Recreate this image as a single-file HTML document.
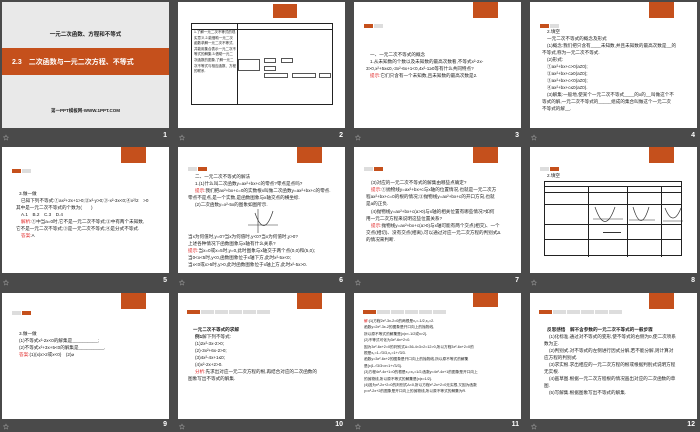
<!DOCTYPE html>
<html><head><meta charset="utf-8"><style>
*{margin:0;padding:0;box-sizing:border-box}
body{width:700px;height:431px;background:#4a4a4a;position:relative;overflow:hidden;font-family:"Liberation Sans","Noto Sans CJK SC",sans-serif}
.s{position:absolute;width:167px;height:126px;background:#fff;overflow:hidden}
.lb{position:absolute;width:167px;height:14px;color:#ddd;font-size:7px}
.lb .i{position:absolute;left:1px;top:4px;font-size:6px}
.lb .n{position:absolute;right:2px;top:3px;font-weight:bold;font-size:7px;color:#fff}
.ob{position:absolute;left:119px;top:0;width:25px;height:16px;background:#c5501c;color:#fff;font-size:3px;text-align:center;padding-top:5px;line-height:3px}
.tb{position:absolute;top:22px;left:10px;height:4px;display:flex;gap:1px}
.tb span{display:block;width:9px;height:4px;background:#ddd}
.tb span.o{background:#c5501c}
.t{position:absolute;font-size:4.6px;line-height:6.6px;color:#1a1a1a;white-space:nowrap}
.r{color:#e02020}
</style></head><body>

<div class="s" style="left:2px;top:2px;background:#e9e9e9">
 <div style="position:absolute;top:28px;width:100%;text-align:center;font-size:5.5px;font-weight:bold;color:#222">一元二次函数、方程和不等式</div>
 <div style="position:absolute;top:46px;width:100%;height:27px;background:#c5501c;color:#fff;font-size:7px;font-weight:bold;padding:9px 0 0 10px">2.3　二次函数与一元二次方程、不等式</div>
 <div style="position:absolute;top:106px;width:100%;text-align:center;font-size:4.5px;font-weight:bold;color:#222">第一PPT模板网-WWW.1PPT.COM</div>
</div>
<div class="lb" style="left:2px;top:129px"><span class="i">☆</span><span class="n">1</span></div>

<div class="s" style="left:178px;top:2px">
 <div class="ob" style="left:95px;width:24px;height:14px;top:2px"></div>
 <div style="position:absolute;left:13px;top:21px;width:142px;height:82px;border:1px solid #222">
  <div style="position:absolute;left:0;top:0;width:100%;height:6px;border-bottom:1px solid #222"></div>
  <div style="position:absolute;left:45px;top:0;height:100%;border-left:1px solid #222"></div>
  <div class="t" style="left:2px;top:6px;font-size:3.5px;line-height:5.6px;white-space:normal;width:42px">1.了解一元二次不等式的现实意义.2.能借助一元二次函数求解一元二次不等式,并能用集合表示一元二次不等式的解集.3.借助一元二次函数的图象,了解一元二次不等式与相应函数、方程的联系.</div>
  <div style="position:absolute;left:46px;top:35px;width:22px;height:12px;border:1px solid #555"></div>
  <div style="position:absolute;left:72px;top:34px;width:12px;height:5px;border:1px solid #555"></div>
  <div style="position:absolute;left:89px;top:34px;width:12px;height:5px;border:1px solid #555"></div>
  <div style="position:absolute;left:72px;top:42px;width:12px;height:5px;border:1px solid #555"></div>
  <div style="position:absolute;left:72px;top:49px;width:24px;height:5px;border:1px solid #555"></div>
  <div style="position:absolute;left:100px;top:49px;width:24px;height:5px;border:1px solid #555"></div>
  <div style="position:absolute;left:127px;top:49px;width:12px;height:5px;border:1px solid #555"></div>
 </div>
</div>
<div class="lb" style="left:178px;top:129px"><span class="i">☆</span><span class="n">2</span></div>

<div class="s" style="left:354px;top:2px">
 <div class="ob"></div>
 <div class="tb"><span class="o"></span><span></span></div>
 <div class="t" style="left:16px;top:50px">一、一元二次不等式的概念</div>
 <div class="t" style="left:16px;top:57px">1.从未知数的个数以及未知数的最高次数看,不等式x²-2x-</div>
 <div class="t" style="left:12px;top:64px">3&gt;0,x²+5x≤0,-3x²-6x+1&lt;0,4x²-1≥0等有什么共同特点?</div>
 <div class="t" style="left:16px;top:71px"><span class="r">提示:</span>它们只含有一个未知数,且未知数的最高次数是2.</div>
</div>
<div class="lb" style="left:354px;top:129px"><span class="i">☆</span><span class="n">3</span></div>

<div class="s" style="left:530px;top:2px">
 <div class="ob"></div>
 <div class="tb"><span class="o"></span><span></span></div>
 <div class="t" style="left:17px;top:27px">2.填空</div>
 <div class="t" style="left:17px;top:34px">一元二次不等式的概念及形式</div>
 <div class="t" style="left:17px;top:41px">(1)概念:我们把只含有____未知数,并且未知数的最高次数是__的</div>
 <div class="t" style="left:12px;top:48px">不等式,称为一元二次不等式.</div>
 <div class="t" style="left:17px;top:55px">(2)形式:</div>
 <div class="t" style="left:17px;top:62px">①ax²+bx+c&gt;0(a≠0);</div>
 <div class="t" style="left:17px;top:69px">②ax²+bx+c≥0(a≠0);</div>
 <div class="t" style="left:17px;top:76px">③ax²+bx+c&lt;0(a≠0);</div>
 <div class="t" style="left:17px;top:83px">④ax²+bx+c≤0(a≠0).</div>
 <div class="t" style="left:17px;top:90px">(3)解集:一般地,使某个一元二次不等式____的x的__叫做这个不</div>
 <div class="t" style="left:12px;top:97px">等式的解,一元二次不等式的_____组成的集合叫做这个一元二次</div>
 <div class="t" style="left:12px;top:104px">不等式的解__.</div>
</div>
<div class="lb" style="left:530px;top:129px"><span class="i">☆</span><span class="n">4</span></div>

<div class="s" style="left:2px;top:147px">
 <div class="ob"></div>
 <div class="tb"><span class="o"></span><span></span></div>
 <div class="t" style="left:17px;top:44px">3.做一做</div>
 <div class="t" style="left:19px;top:51px">已知下列不等式:①ax²+2x+1&gt;0;②x²-y&gt;0;③-x²-3x&lt;0;④x²/2　&gt;0</div>
 <div class="t" style="left:14px;top:58px">其中是一元二次不等式的个数为(　　)</div>
 <div class="t" style="left:19px;top:65px">A.1　B.2　C.3　D.4</div>
 <div class="t" style="left:19px;top:72px"><span class="r">解析:</span>①中当a=0时,它不是一元二次不等式;②中有两个未知数,</div>
 <div class="t" style="left:14px;top:79px">它不是一元二次不等式;③是一元二次不等式;④是分式不等式.</div>
 <div class="t" style="left:19px;top:86px"><span class="r">答案:</span>A</div>
</div>
<div class="lb" style="left:2px;top:274px"><span class="i">☆</span><span class="n">5</span></div>

<div class="s" style="left:178px;top:147px">
 <div class="ob" style="left:119px"></div>
 <div class="tb" style="left:10px;top:20px"><span></span><span class="o"></span></div>
 <div class="t" style="left:17px;top:27px">二、一元二次不等式的解法</div>
 <div class="t" style="left:17px;top:34px">1.(1)什么叫二次函数y=ax²+bx+c的零点?零点是点吗?</div>
 <div class="t" style="left:17px;top:41px"><span class="r">提示:</span>我们把ax²+bx+c=0的实数根x叫做二次函数y=ax²+bx+c的零点.</div>
 <div class="t" style="left:10px;top:48px">零点不是点,是一个实数,是函数图象与x轴交点的横坐标.</div>
 <div class="t" style="left:17px;top:55px">(2)二次函数y=x²-5x的图象如图所示.</div>
 <svg style="position:absolute;left:68px;top:60px" width="34" height="26"><path d="M2 18H32M12 2V26" stroke="#333" stroke-width=".6" fill="none"/><path d="M9 6Q18 32 27 4" stroke="#333" stroke-width=".7" fill="none"/></svg>
 <div class="t" style="left:10px;top:87px">当x为何值时,y=0?当x为何值时,y&lt;0?当x为何值时,y&gt;0?</div>
 <div class="t" style="left:10px;top:94px">上述各种情况下函数图象与x轴有什么关系?</div>
 <div class="t" style="left:10px;top:101px"><span class="r">提示:</span>当x=0或x=5时,y=0,此时图象与x轴交于两个点(0,0)和(5,0);</div>
 <div class="t" style="left:10px;top:108px">当0&lt;x&lt;5时,y&lt;0,函数图象位于x轴下方,此时x²-5x&lt;0;</div>
 <div class="t" style="left:10px;top:115px">当x&lt;0或x&gt;5时,y&gt;0,此时函数图象位于x轴上方,此时x²-5x&gt;0.</div>
</div>
<div class="lb" style="left:178px;top:274px"><span class="i">☆</span><span class="n">6</span></div>

<div class="s" style="left:354px;top:147px">
 <div class="ob"></div>
 <div class="tb" style="top:20px"><span></span><span class="o"></span></div>
 <div class="t" style="left:17px;top:33px">(3)对应的一元二次不等式的解集由哪些点确定?</div>
 <div class="t" style="left:17px;top:40px"><span class="r">提示:</span>①抛物线y=ax²+bx+c与x轴的位置情况,也就是一元二次方</div>
 <div class="t" style="left:12px;top:47px">程ax²+bx+c=0的根的情况;②抛物线y=ax²+bx+c的开口方向,也就</div>
 <div class="t" style="left:12px;top:54px">是a的正负.</div>
 <div class="t" style="left:17px;top:62px">(4)抛物线y=ax²+bx+c(a&gt;0)与x轴的相关位置有哪些情况?如何</div>
 <div class="t" style="left:12px;top:69px">用一元二次方程来说明这些位置关系?</div>
 <div class="t" style="left:17px;top:76px"><span class="r">提示:</span>抛物线y=ax²+bx+c(a&gt;0)与x轴可能有两个交点(相交)、一个</div>
 <div class="t" style="left:12px;top:83px">交点(相切)、没有交点(相离),可以通过对应一元二次方程的判别式Δ</div>
 <div class="t" style="left:12px;top:90px">的情况来判断.</div>
</div>
<div class="lb" style="left:354px;top:274px"><span class="i">☆</span><span class="n">7</span></div>

<div class="s" style="left:530px;top:147px">
 <div class="ob"></div>
 <div class="tb" style="top:20px"><span></span><span class="o"></span></div>
 <div class="t" style="left:17px;top:26px">2.填空</div>
 <div style="position:absolute;left:14px;top:34px;width:138px;height:75px;border:1px solid #222">
  <div style="position:absolute;left:0;top:0;width:100%;height:5px;border-bottom:1px solid #222"></div>
  <div style="position:absolute;left:0;top:10px;width:100%;border-top:1px solid #222"></div>
  <div style="position:absolute;left:0;top:22px;width:100%;border-top:1px solid #222"></div>
  <div style="position:absolute;left:0;top:42px;width:100%;border-top:1px solid #222"></div>
  <div style="position:absolute;left:0;top:57px;width:100%;border-top:1px solid #222"></div>
  <div style="position:absolute;left:43px;top:5px;height:70px;border-left:1px solid #222"></div>
  <div style="position:absolute;left:82px;top:5px;height:70px;border-left:1px solid #222"></div>
  <div style="position:absolute;left:116px;top:5px;height:70px;border-left:1px solid #222"></div>
  <svg style="position:absolute;left:48px;top:24px" width="90" height="18"><path d="M2 1Q12 30 22 1M40 1Q48 28 56 1M72 2Q80 22 88 2" stroke="#333" stroke-width=".7" fill="none"/><path d="M0 13H30M36 14H62M70 15H90" stroke="#333" stroke-width=".5"/></svg>
  <div style="position:absolute;left:58px;top:50px;width:18px;border-top:1px solid #333"></div>
 </div>
</div>
<div class="lb" style="left:530px;top:274px"><span class="i">☆</span><span class="n">8</span></div>

<div class="s" style="left:2px;top:293px">
 <div class="ob"></div>
 <div class="tb" style="top:18px"><span></span><span class="o"></span></div>
 <div class="t" style="left:17px;top:38px">3.做一做</div>
 <div class="t" style="left:17px;top:45px">(1)不等式x²-2x&lt;0的解集是__________;</div>
 <div class="t" style="left:17px;top:52px">(2)不等式x²+3x+5&lt;0的解集是__________.</div>
 <div class="t" style="left:17px;top:59px"><span class="r">答案:</span>(1){x|x&gt;2或x&lt;0}　(2)⌀</div>
</div>
<div class="lb" style="left:2px;top:418px"><span class="i">☆</span><span class="n">9</span></div>

<div class="s" style="left:178px;top:293px">
 <div class="ob"></div>
 <div class="tb" style="top:17px;left:9px"><span class="o" style="width:13px"></span><span style="width:13px"></span><span style="width:13px"></span><span style="width:13px"></span><span style="width:13px"></span><span style="width:13px"></span></div>
 <div class="t" style="left:15px;top:34px;font-weight:bold">一元二次不等式的求解</div>
 <div class="t" style="left:17px;top:41px"><b>例1</b>解下列不等式:</div>
 <div class="t" style="left:17px;top:48px">(1)2x²-3x-2&gt;0;</div>
 <div class="t" style="left:17px;top:55px">(2)-3x²+6x-2&gt;0;</div>
 <div class="t" style="left:17px;top:62px">(3)4x²-4x+1≤0;</div>
 <div class="t" style="left:17px;top:69px">(4)x²-2x+2&gt;0.</div>
 <div class="t" style="left:17px;top:76px"><span class="r">分析:</span>先求出对应一元二次方程的根,再结合对应的二次函数的</div>
 <div class="t" style="left:10px;top:83px">图象写出不等式的解集.</div>
</div>
<div class="lb" style="left:178px;top:418px"><span class="i">☆</span><span class="n">10</span></div>

<div class="s" style="left:354px;top:293px">
 <div class="ob" style="top:0;height:14px"></div>
 <div class="tb" style="top:17px;left:9px"><span class="o" style="width:13px"></span><span style="width:13px"></span><span style="width:13px"></span><span style="width:13px"></span><span style="width:13px"></span><span style="width:13px"></span></div>
 <div class="t" style="left:10px;top:25px;font-size:3.7px;line-height:6.4px"><span class="r">解</span>:(1)方程2x²-3x-2=0的两根是x₁=-1/2,x₂=2.<br>函数y=2x²-3x-2的图象是开口向上的抛物线,<br>所以原不等式的解集是{x|x&lt;-1/2或x&gt;2}.<br>(2)不等式可化为3x²-6x+2&lt;0.<br>因为3x²-6x+2=0的判别式Δ=36-4×3×2=12&gt;0,所以方程3x²-6x+2=0的<br>根是x₁=1-√3/3,x₂=1+√3/3.<br>函数y=3x²-6x+2的图象是开口向上的抛物线,所以原不等式的解集<br>是{x|1-√3/3&lt;x&lt;1+√3/3}.<br>(3)方程4x²-4x+1=0的根是x₁=x₂=1/2,函数y=4x²-4x+1的图象是开口向上<br>的抛物线,所以原不等式的解集是{x|x=1/2}.<br>(4)因为x²-2x+2=0的判别式Δ&lt;0,所以方程x²-2x+2=0无实根,又因为函数<br>y=x²-2x+2的图象是开口向上的抛物线,所以原不等式的解集为R.</div>
</div>
<div class="lb" style="left:354px;top:418px"><span class="i">☆</span><span class="n">11</span></div>

<div class="s" style="left:530px;top:293px">
 <div class="ob"></div>
 <div class="tb" style="top:17px;left:9px"><span class="o" style="width:13px"></span><span style="width:13px"></span><span style="width:13px"></span><span style="width:13px"></span><span style="width:13px"></span><span style="width:13px"></span></div>
 <div class="t" style="left:17px;top:34px;font-weight:bold">反思感悟　解不含参数的一元二次不等式的一般步骤</div>
 <div class="t" style="left:19px;top:41px">(1)化标准.通过对不等式的变形,使不等式的右侧为0,使二次项系</div>
 <div class="t" style="left:14px;top:48px">数为正.</div>
 <div class="t" style="left:19px;top:55px">(2)判别式.对不等式的左侧进行因式分解,若不能分解,则计算对</div>
 <div class="t" style="left:14px;top:62px">应方程的判别式.</div>
 <div class="t" style="left:19px;top:69px">(3)求实根.求出相应的一元二次方程的根或根据判别式说明方程</div>
 <div class="t" style="left:14px;top:76px">无实根.</div>
 <div class="t" style="left:19px;top:83px">(4)画草图.根据一元二次方程根的情况画出对应的二次函数的草</div>
 <div class="t" style="left:14px;top:90px">图.</div>
 <div class="t" style="left:19px;top:97px">(5)写解集.根据图象写出不等式的解集.</div>
</div>
<div class="lb" style="left:530px;top:418px"><span class="i">☆</span><span class="n">12</span></div>

</body></html>
